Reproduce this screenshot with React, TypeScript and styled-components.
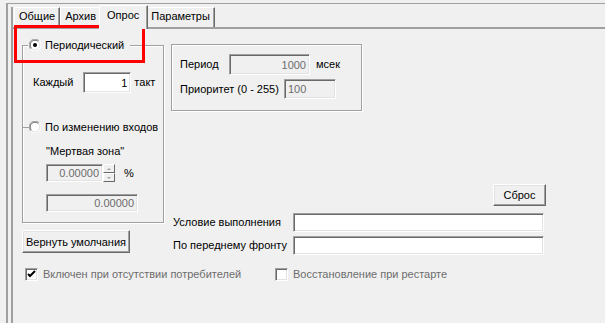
import styled, { createGlobalStyle } from "styled-components";

const GlobalStyle = createGlobalStyle`
  body {
    margin: 0;
    background: #f0f0f0;
    font-family: "Liberation Sans", Arial, sans-serif;
    font-size: 11px;
    color: #000;
  }
  * { box-sizing: border-box; }
`;

const Page = styled.div`
  position: relative;
  width: 605px;
  height: 323px;
  overflow: hidden;
  padding: 3px 0 0 6px;
`;

const OuterFrame = styled.div`
  height: 100%;
  border-top: 1px solid #a0a0a0;
  border-left: 2px solid #a0a0a0;
  padding: 3px 0 0 3px;
`;

const TabControl = styled.div`
  height: 100%;
  display: flex;
  flex-direction: column;
  border-left: 2px solid #a0a0a0;
`;

const TabStrip = styled.div`
  display: flex;
  align-items: flex-end;
  height: 20px;
  padding-left: 1px;
`;

const Tab = styled.div<{ $active?: boolean }>`
  position: relative;
  height: ${(p) => (p.$active ? "24px" : "20px")};
  margin: ${(p) => (p.$active ? "0 -2px -2px" : "0")};
  padding: ${(p) => (p.$active ? "3px 8px 0 7px" : "2px 4px 0")};
  z-index: ${(p) => (p.$active ? 1 : 0)};
  background: #f0f0f0;
  border-top: 1px solid #fff;
  border-left: 1px solid #fff;
  border-right: 1px solid #696969;
  box-shadow: inset -1px 0 0 #a0a0a0;
  line-height: 13px;
  white-space: nowrap;
`;

const Panel = styled.div`
  flex: 1;
  border-top: 2px solid #a0a0a0;
  padding-left: 9px;
`;

const Columns = styled.div`
  display: flex;
  gap: 7px;
`;

const LeftCol = styled.div`
  width: 142px;
  margin-top: 16px;
  display: flex;
  flex-direction: column;
`;

const RightCol = styled.div`
  width: 375px;
  margin-top: 15px;
  display: flex;
  flex-direction: column;
`;

const GroupBox = styled.div<{ $w?: number; $h: number }>`
  width: ${(p) => (p.$w ? `${p.$w}px` : "auto")};
  height: ${(p) => p.$h}px;
  border: 1px solid #a0a0a0;
  box-shadow: inset 1px 1px 0 #fff, 1px 1px 0 #fff;
  display: flex;
  flex-direction: column;
`;

const Legend = styled.div`
  display: flex;
  align-items: center;
  align-self: flex-start;
  gap: 4px;
  height: 14px;
  margin: -8px 0 0 5px;
  padding: 0 6px 0 1px;
  background: #f0f0f0;
`;

const Row = styled.div<{ $top?: number; $left?: number; $h?: number }>`
  display: flex;
  align-items: center;
  margin-top: ${(p) => p.$top ?? 0}px;
  padding-left: ${(p) => p.$left ?? 0}px;
  height: ${(p) => (p.$h ? `${p.$h}px` : "auto")};
  white-space: nowrap;
`;

const RadioRow = styled.div`
  display: flex;
  align-items: center;
  gap: 4px;
  height: 14px;
  margin: 27px 0 0 -1px;
  white-space: nowrap;
`;

const Tick = styled.span`
  width: 7px;
  height: 1px;
  margin-right: -4px;
  background: #a0a0a0;
`;

const Label = styled.span<{ $w?: number; $ml?: number; $muted?: boolean }>`
  display: inline-block;
  width: ${(p) => (p.$w ? `${p.$w}px` : "auto")};
  margin-left: ${(p) => p.$ml ?? 0}px;
  color: ${(p) => (p.$muted ? "#6d6d6d" : "#000")};
  line-height: 13px;
`;

const Field = styled.div<{
  $w: number;
  $h: number;
  $disabled?: boolean;
  $align?: "left" | "right";
  $ml?: number;
  $mt?: number;
}>`
  width: ${(p) => p.$w}px;
  height: ${(p) => p.$h}px;
  margin-left: ${(p) => p.$ml ?? 0}px;
  margin-top: ${(p) => p.$mt ?? 0}px;
  flex-shrink: 0;
  display: flex;
  align-items: center;
  justify-content: ${(p) => (p.$align === "left" ? "flex-start" : "flex-end")};
  padding: 0 3px 0 3px;
  background: ${(p) => (p.$disabled ? "#f0f0f0" : "#fff")};
  color: ${(p) => (p.$disabled ? "#6d6d6d" : "#000")};
  border-top: 1px solid #a0a0a0;
  border-left: 1px solid #a0a0a0;
  border-right: 1px solid #fff;
  border-bottom: 1px solid #fff;
  box-shadow: inset 1px 1px 0 #696969, inset -1px -1px 0 #e3e3e3;
`;

const Button = styled.div<{ $w: number; $h: number; $mt?: number }>`
  width: ${(p) => p.$w}px;
  height: ${(p) => p.$h}px;
  margin-top: ${(p) => p.$mt ?? 0}px;
  display: flex;
  align-items: center;
  justify-content: center;
  background: #f0f0f0;
  border-top: 1px solid #fff;
  border-left: 1px solid #fff;
  border-right: 1px solid #696969;
  border-bottom: 1px solid #696969;
  box-shadow: inset -1px -1px 0 #a0a0a0, inset 1px 1px 0 #e3e3e3;
  white-space: nowrap;
`;

const ResetButton = styled(Button)`
  align-self: flex-end;
`;

const SpinButtons = styled.div`
  display: flex;
  flex-direction: column;
  width: 12px;
  height: 18px;
`;

const SpinBtn = styled.div<{ $down?: boolean }>`
  flex: 1;
  display: flex;
  align-items: center;
  justify-content: center;
  background: #f0f0f0;
  border-top: 1px solid #fff;
  border-left: 1px solid #fff;
  border-right: 1px solid #696969;
  border-bottom: 1px solid #696969;
  &::after {
    content: "";
    border-left: 2px solid transparent;
    border-right: 2px solid transparent;
    ${(p) =>
      p.$down ? "border-top: 2px solid #a0a0a0;" : "border-bottom: 2px solid #a0a0a0;"}
  }
`;

const CheckRow = styled.div`
  display: flex;
  margin: 13px 0 0 3px;
`;

const CheckItem = styled.div<{ $w?: number }>`
  display: flex;
  align-items: center;
  width: ${(p) => (p.$w ? `${p.$w}px` : "auto")};
  white-space: nowrap;
`;

const Box = styled.div`
  width: 13px;
  height: 13px;
  display: flex;
  align-items: center;
  justify-content: center;
  background: #fff;
  border-top: 1px solid #a0a0a0;
  border-left: 1px solid #a0a0a0;
  border-right: 1px solid #fff;
  border-bottom: 1px solid #fff;
  box-shadow: inset 1px 1px 0 #696969, inset -1px -1px 0 #e3e3e3;
`;

const RedMark = styled.div`
  position: absolute;
  left: 14px;
  top: 25px;
  width: 131px;
  height: 38px;
  border: 3px solid #ff0000;
`;

const Radio = ({ checked = false }: { checked?: boolean }) => (
  <svg width="12" height="12" viewBox="0 0 12 12" style={{ flexShrink: 0 }}>
    <circle cx="6" cy="6" r="5" fill="#fff" />
    <path d="M1.8 10.2 A5.5 5.5 0 0 1 10.2 1.8" fill="none" stroke="#a0a0a0" strokeWidth="1" />
    <path d="M10.2 1.8 A5.5 5.5 0 0 1 1.8 10.2" fill="none" stroke="#fff" strokeWidth="1" />
    <path d="M2.6 9.4 A4.5 4.5 0 0 1 9.4 2.6" fill="none" stroke="#696969" strokeWidth="1" />
    <path d="M9.4 2.6 A4.5 4.5 0 0 1 2.6 9.4" fill="none" stroke="#e3e3e3" strokeWidth="1" />
    {checked && <circle cx="6" cy="6" r="2" fill="#000" />}
  </svg>
);

const CheckBox = ({ checked = false }: { checked?: boolean }) => (
  <Box>
    {checked && (
      <svg width="9" height="9" viewBox="0 0 9 9">
        <path d="M1 4 L3 6 L8 1" fill="none" stroke="#000" strokeWidth="2" />
      </svg>
    )}
  </Box>
);

const App = () => {
  const tabs = ["Общие", "Архив", "Опрос", "Параметры"];
  return (
    <Page>
      <GlobalStyle />
      <OuterFrame>
        <TabControl>
          <TabStrip>
            {tabs.map((t) => (
              <Tab key={t} $active={t === "Опрос"}>
                {t}
              </Tab>
            ))}
          </TabStrip>
          <Panel>
            <Columns>
              <LeftCol>
                <GroupBox $h={178}>
                  <Legend>
                    <Radio checked />
                    <span>Периодический</span>
                  </Legend>
                  <Row $top={20} $left={10} $h={21}>
                    <Label>Каждый</Label>
                    <Field $w={48} $h={21} $ml={10}>
                      1
                    </Field>
                    <Label $ml={3}>такт</Label>
                  </Row>
                  <RadioRow>
                    <Tick />
                    <Radio />
                    <span>По изменению входов</span>
                  </RadioRow>
                  <Row $top={11} $left={23}>
                    <Label>"Мертвая зона"</Label>
                  </Row>
                  <Row $top={6} $left={23} $h={18}>
                    <Field $w={57} $h={18} $disabled>
                      0.00000
                    </Field>
                    <SpinButtons>
                      <SpinBtn />
                      <SpinBtn $down />
                    </SpinButtons>
                    <Label $ml={9}>%</Label>
                  </Row>
                  <Row $top={12} $left={23}>
                    <Field $w={92} $h={18} $disabled>
                      0.00000
                    </Field>
                  </Row>
                </GroupBox>
                <Button $w={108} $h={23} $mt={7}>
                  Вернуть умолчания
                </Button>
              </LeftCol>
              <RightCol>
                <GroupBox $w={191} $h={67}>
                  <Row $top={9} $left={8} $h={21}>
                    <Label $w={49}>Период</Label>
                    <Field $w={81} $h={21} $disabled>
                      1000
                    </Field>
                    <Label $ml={6}>мсек</Label>
                  </Row>
                  <Row $top={4} $left={8} $h={20}>
                    <Label $w={104}>Приоритет (0 - 255)</Label>
                    <Field $w={52} $h={20} $disabled $align="left">
                      100
                    </Field>
                  </Row>
                </GroupBox>
                <ResetButton $w={53} $h={22} $mt={73}>
                  Сброс
                </ResetButton>
                <Row $top={7} $left={2} $h={19}>
                  <Label $w={120}>Условие выполнения</Label>
                  <Field $w={251} $h={19} />
                </Row>
                <Row $top={4} $left={2} $h={19}>
                  <Label $w={120}>По переднему фронту</Label>
                  <Field $w={251} $h={19} />
                </Row>
              </RightCol>
            </Columns>
            <CheckRow>
              <CheckItem $w={250}>
                <CheckBox checked />
                <Label $ml={5} $muted>
                  Включен при отсутствии потребителей
                </Label>
              </CheckItem>
              <CheckItem>
                <CheckBox />
                <Label $ml={5} $muted>
                  Восстановление при рестарте
                </Label>
              </CheckItem>
            </CheckRow>
          </Panel>
        </TabControl>
      </OuterFrame>
      <RedMark />
    </Page>
  );
};

export default App;
